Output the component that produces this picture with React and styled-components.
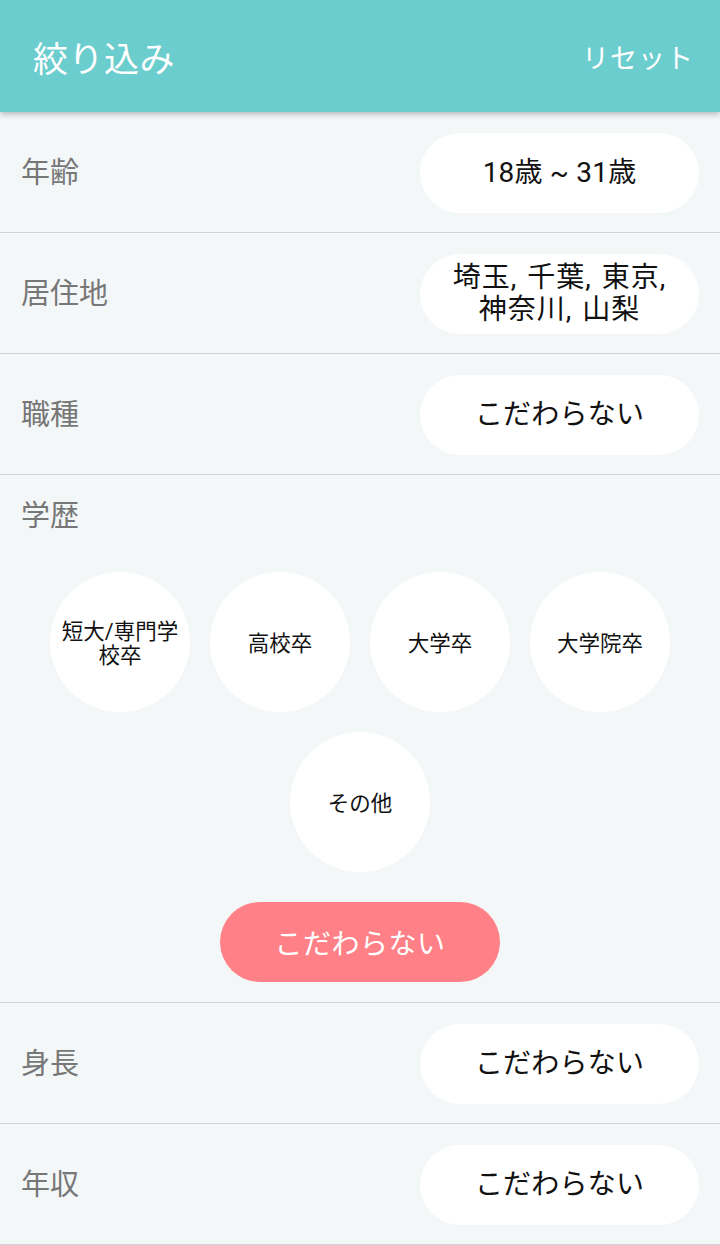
import React from 'react'
import styled, { createGlobalStyle } from 'styled-components'

const GlobalStyle = createGlobalStyle`
  html, body {
    margin: 0;
    padding: 0;
    background: #f4f7f8;
  }
  body {
    font-family: Roboto, "Noto Sans CJK JP", sans-serif;
  }
  * {
    box-sizing: border-box;
  }
`

const rows = [
  { label: '年齢', value: '18歳 ~ 31歳' },
  { label: '居住地', value: ['埼玉, 千葉, 東京,', '神奈川, 山梨'] },
  { label: '職種', value: 'こだわらない' },
]

const bottomRows = [
  { label: '身長', value: 'こだわらない' },
  { label: '年収', value: 'こだわらない' },
]

const schools = ['短大/専門学校卒', '高校卒', '大学卒', '大学院卒', 'その他']

const Row = ({ label, value }) => (
  <RowWrap>
    <Label>{label}</Label>
    <Pill small={Array.isArray(value)}>
      {Array.isArray(value) ? value.map(v => <span key={v}>{v}</span>) : value}
    </Pill>
  </RowWrap>
)

const App = () => (
  <Page>
    <GlobalStyle />
    <Header>
      <Title>絞り込み</Title>
      <Reset>リセット</Reset>
    </Header>
    {rows.map(r => (
      <Row key={r.label} {...r} />
    ))}
    <Section>
      <Label>学歴</Label>
      <Circles>
        {schools.map(s => (
          <Circle key={s}>{s}</Circle>
        ))}
      </Circles>
      <AnyButton>こだわらない</AnyButton>
    </Section>
    {bottomRows.map(r => (
      <Row key={r.label} {...r} />
    ))}
  </Page>
)

export default App

const Page = styled.div`
  width: 720px;
  min-height: 1245px;
  background: #f4f7f8;
`

const Header = styled.header`
  height: 112px;
  background: #6bcdcd;
  display: flex;
  align-items: center;
  justify-content: space-between;
  padding: 0 26px 0 33px;
  box-shadow: 0 2px 6px rgba(0, 0, 0, 0.28);
  position: relative;
  z-index: 1;
`

const Title = styled.h1`
  margin: 0;
  color: #fff;
  font-size: 35px;
  font-weight: 400;
  letter-spacing: 0.5px;
`

const Reset = styled.button`
  border: 0;
  background: none;
  padding: 0;
  color: #fff;
  font-family: inherit;
  font-size: 27px;
  letter-spacing: 1px;
`

const RowWrap = styled.div`
  height: 121px;
  display: flex;
  align-items: center;
  justify-content: space-between;
  padding: 0 21px 0 21px;
  border-bottom: 1px solid #d0d4d6;
`

const Label = styled.div`
  color: #777;
  font-size: 29px;
  line-height: 40px;
  margin-top: 2px;
`

const Pill = styled.div`
  width: 279px;
  height: 80px;
  border-radius: 40px;
  background: #fff;
  color: #111;
  display: flex;
  flex-direction: column;
  align-items: center;
  justify-content: center;
  font-size: 28px;
  line-height: ${p => (p.small ? '32px' : '36px')};
  letter-spacing: ${p => (p.small ? '1px' : '0.2px')};
  word-spacing: ${p => (p.small ? '2px' : '0')};
  margin-top: 1px;
`

const Section = styled.section`
  padding: 19px 21px 20px;
  border-bottom: 1px solid #d0d4d6;
  display: flex;
  flex-direction: column;
`

const Circles = styled.div`
  display: flex;
  flex-wrap: wrap;
  justify-content: center;
  gap: 20px;
  margin-top: 36px;
`

const Circle = styled.div`
  width: 140px;
  height: 140px;
  border-radius: 50%;
  background: #fff;
  color: #111;
  display: flex;
  align-items: center;
  justify-content: center;
  text-align: center;
  padding: 4px 8px 0;
  font-size: 21.5px;
  line-height: 24px;
`

const AnyButton = styled.button`
  align-self: center;
  width: 280px;
  height: 80px;
  margin-top: 30px;
  border: 0;
  border-radius: 40px;
  background: #ff8086;
  color: #fff;
  font-family: inherit;
  font-size: 28px;
  letter-spacing: 0.5px;
`
